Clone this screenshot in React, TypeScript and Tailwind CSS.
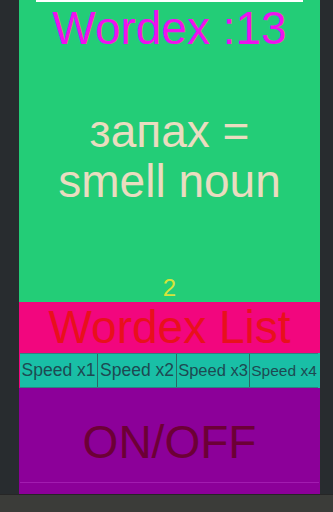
import React from "react";

const font = { fontFamily: '"Liberation Sans", Arial, sans-serif' };

export default function App() {
  const speeds = [
    { label: "Speed x1", w: "w-[78px]", size: "text-[17.5px]" },
    { label: "Speed x2", w: "w-[79px]", size: "text-[17.5px]" },
    { label: "Speed x3", w: "w-[73px]", size: "text-[16.5px]" },
    { label: "Speed x4", w: "w-[68px]", size: "text-[15.5px]" },
  ];
  return (
    <div
      className="w-[333px] h-[512px] bg-[#282c2f] flex flex-col overflow-hidden font-['Liberation_Sans',Arial,sans-serif]"
      style={font}
    >
      <div className="ml-[19px] w-[301px] h-[494px] flex flex-col">
        {/* Green section */}
        <div className="relative h-[302px] bg-[#23cd77] flex flex-col items-center">
          <div className="absolute top-0 left-[17px] w-[267px] h-[1.5px] bg-white" />
          <div className="pt-[2px] text-[46px] leading-[53px] text-[#f010ee] whitespace-nowrap">
            Wordex :13
          </div>
          <div className="mt-[51px] text-[46px] leading-[50px] text-[#eadcc0] text-center">
            <div>запах =</div>
            <div>smell noun</div>
          </div>
          <div className="mt-auto mb-[1px] text-[24px] leading-[27px] text-[#d6e43a]">2</div>
        </div>
        {/* Pink section */}
        <div className="h-[51px] bg-[#f2067e] flex items-center justify-center">
          <span className="text-[46px] leading-[51px] text-[#e8101c] whitespace-nowrap">
            Wordex List
          </span>
        </div>
        {/* Speed row */}
        <div className="h-[35px] bg-[#f2067e] flex">
          <div className="ml-[1px] flex border-y border-[#2f8080] bg-[#19bfa6]">
            {speeds.map((s, i) => (
              <div
                key={s.label}
                className={`${s.w} h-full flex items-center justify-center ${
                  i < 3 ? "border-r border-[#2a6866]" : ""
                } text-[#1d4a52] whitespace-nowrap`}
              >
                <span className={s.size}>{s.label}</span>
              </div>
            ))}
          </div>
          <div className="flex-1 bg-[#19bfa6]" />
        </div>
        {/* Purple section */}
        <div className="flex-1 bg-[#8c0099] flex flex-col">
          <div className="flex-1 flex items-center justify-center pt-[14px]">
            <span className="text-[46px] leading-[53px] text-[#6c0036]">ON/OFF</span>
          </div>
          <div className="h-[1px] mx-[1px] bg-[#a21cb0]" />
          <div className="h-[11px]" />
        </div>
      </div>
      <div className="h-[1px] bg-[#262626]" />
      <div className="flex-1 bg-[#3b3c39]" />
    </div>
  );
}
